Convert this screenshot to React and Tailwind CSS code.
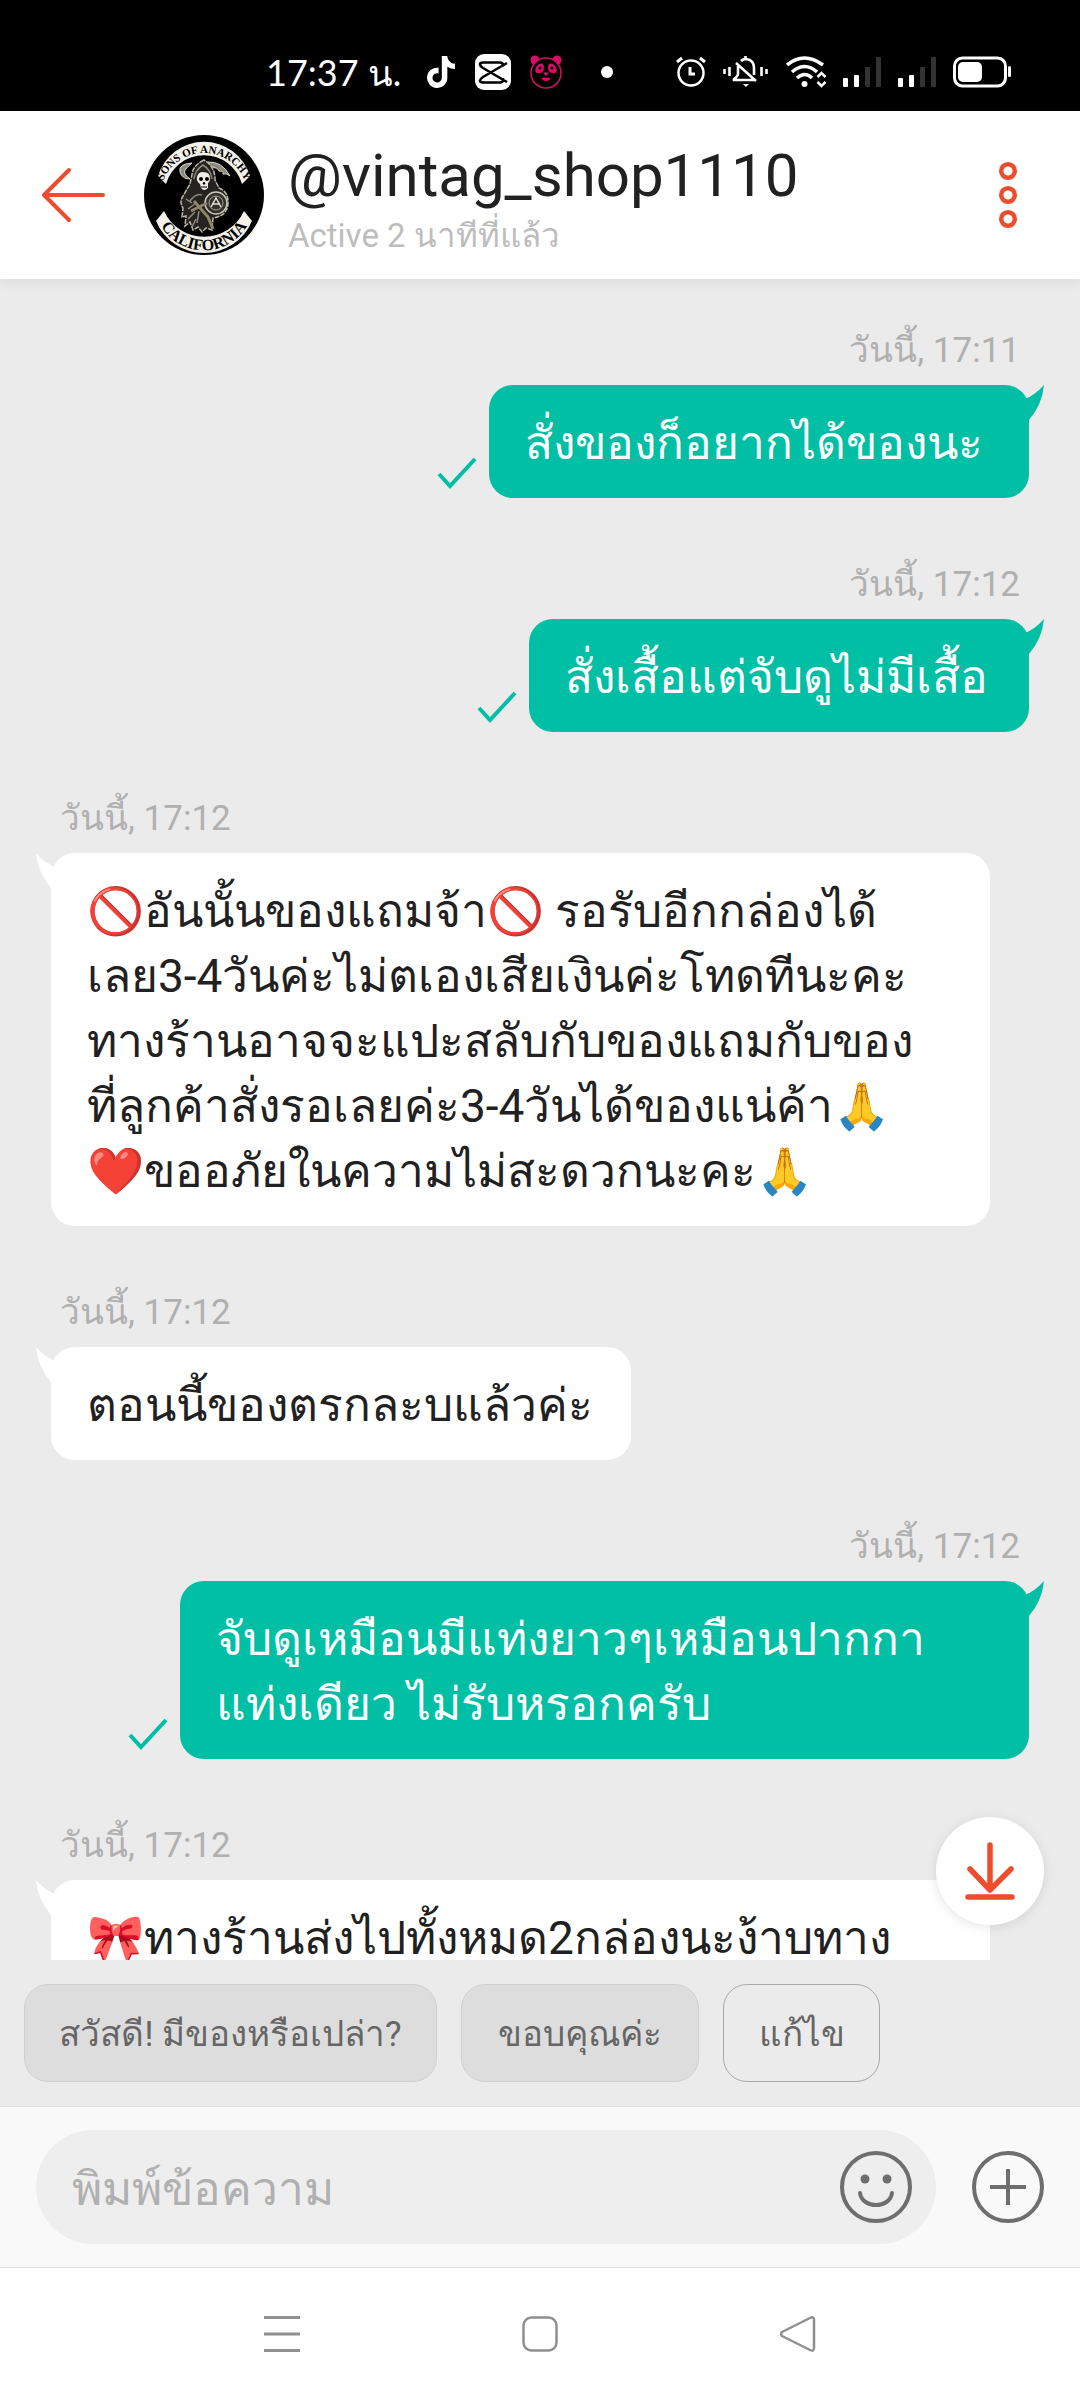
import { FaTiktok } from 'react-icons/fa6'

const messages = [
  { id: 1, mine: true, time: 'วันนี้, 17:11', width: 'w-[540px]', lines: ['สั่งของก็อยากได้ของนะ'] },
  { id: 2, mine: true, time: 'วันนี้, 17:12', width: 'w-[500px]', lines: ['สั่งเสื้อแต่จับดูไม่มีเสื้อ'] },
  {
    id: 3,
    mine: false,
    time: 'วันนี้, 17:12',
    width: 'w-[939px]',
    lines: [
      '🚫อันนั้นของแถมจ้า🚫 รอรับอีกกล่องได้',
      'เลย3-4วันค่ะไม่ตเองเสียเงินค่ะโทดทีนะคะ',
      'ทางร้านอาจจะแปะสลับกับของแถมกับของ',
      'ที่ลูกค้าสั่งรอเลยค่ะ3-4วันได้ของแน่ค้า🙏',
      '❤️ขออภัยในความไม่สะดวกนะคะ🙏'
    ]
  },
  { id: 4, mine: false, time: 'วันนี้, 17:12', width: 'w-[580px]', lines: ['ตอนนี้ของตรกละบแล้วค่ะ'] },
  {
    id: 5,
    mine: true,
    time: 'วันนี้, 17:12',
    width: 'w-[849px]',
    lines: ['จับดูเหมือนมีแท่งยาวๆเหมือนปากกา', 'แท่งเดียว ไม่รับหรอกครับ']
  },
  {
    id: 6,
    mine: false,
    time: 'วันนี้, 17:12',
    width: 'w-[939px]',
    lines: ['🎀ทางร้านส่งไปทั้งหมด2กล่องนะง้าบทาง']
  }
]

const CapCutIcon = () => (
  <svg viewBox="0 0 36 36" className="size-9">
    <rect width="36" height="36" rx="9" fill="#fff" />
    <path
      d="M32 9 8 23q-3 2-3 3.500q0 2 3 2h17q3 0 3-3v-1.500M32 28 8 14q-3-2-3-3.500q0-2 3-2h17q3 0 3 3v1"
      fill="none"
      stroke="#000"
      strokeWidth="2.600"
    />
  </svg>
)

const PandaIcon = () => (
  <svg viewBox="0 0 34 34" className="size-[34px]" fill="#d70f64">
    <circle cx="6" cy="5" r="4.500" />
    <circle cx="28" cy="5" r="4.500" />
    <circle cx="17" cy="18" r="15" fill="#000" stroke="#d70f64" strokeWidth="1.500" />
    <path d="M14 9c2 4 1 9-4 9-4 1-5-4-2-7 1-2 4-3 6-2zM20 9c-2 4-1 9 4 9 4 1 5-4 2-7-1-2-4-3-6-2z" />
    <circle cx="11" cy="13" r="1.500" fill="#000" />
    <circle cx="23" cy="13" r="1.500" fill="#000" />
    <path d="M14 18q3-1.500 6 0l-3 3zM12.500 23q4.500-1 9 0-1 3-4.500 3t-4.500-3z" />
  </svg>
)

const AlarmIcon = () => (
  <svg viewBox="0 0 30 32" className="h-8 w-[30px]" fill="none" stroke="#fff" strokeWidth="2.500">
    <circle cx="15" cy="17" r="12.500" />
    <path d="M14 11v7h5" strokeWidth="3" />
    <path d="M1 6l5-4M29 6l-5-4" strokeWidth="3" />
  </svg>
)

const MutedBellIcon = () => (
  <svg viewBox="0 0 46 32" className="h-8 w-[46px]" fill="none" stroke="#fff" strokeWidth="2.600">
    <path d="M1.500 13v5M6.500 11v9M38.500 11v9M43.500 13v5" />
    <path d="M18 5q2-2 5-2 8 1 8 9v7M15 10v8q0 2-4 5v1h20M13 7l20 18" />
    <path d="M20 28h6l-3 3z" fill="#fff" stroke="none" />
    <path d="M22.500 0v4" />
  </svg>
)

const WifiIcon = () => (
  <svg viewBox="0 0 40 32" className="h-8 w-10" fill="none" stroke="#fff" strokeWidth="3.500">
    <path d="M1 9q17-14 36 0M6 16q13-11 25 0M11 22q8-7 15 0" />
    <circle cx="18.500" cy="28" r="3" fill="#fff" stroke="none" />
    <path d="M31.500 21l4-4 4 4M31.500 26l4 4 4-4" strokeWidth="2.500" />
  </svg>
)

const SignalIcon = () => (
  <svg viewBox="0 0 38 32" className="h-8 w-[38px]" fill="#fff">
    <rect x="0" y="22" width="5" height="9" rx="1" />
    <rect x="11" y="19" width="5" height="12" rx="1" />
    <rect x="22" y="11" width="5" height="20" rx="1" fill="#333" />
    <rect x="33" y="1" width="5" height="30" rx="1" fill="#333" />
  </svg>
)

const BatteryIcon = () => (
  <svg viewBox="0 0 58 32" className="h-8 w-[58px]" fill="#fff">
    <rect x="1.500" y="2" width="51" height="28" rx="8" fill="none" stroke="#fff" strokeWidth="3" />
    <rect x="5" y="6" width="24" height="20" rx="5" />
    <rect x="55" y="10" width="3" height="11" rx="1.500" />
  </svg>
)

const Avatar = () => (
  <svg viewBox="0 0 120 120" className="size-[120px] shrink-0" role="img" aria-label="Shop logo">
    <defs>
      <path id="topArc" d="M19 46A44 44 0 0 1 101 46" />
      <path id="bottomArc" d="M14 85A50 50 0 0 0 106 85" />
    </defs>
    <circle cx="60" cy="60" r="60" />
    {/* scythe */}
    <path d="M64 27q14-1 22 14-3-3-7-2 1-3-4-3 0-3-11-5zM48 28q-14 1-12 9 2 7 10 7-7-5-5-9 2-3 7-7z" fill="#8d8a80" stroke="#d9d6cb" strokeWidth="1" />
    {/* hood and robe */}
    <path
      d="M60 25q-8 4-11 10l-3 14-7 12q-4 6 0 12l-1 9 4-1-1 10 5-4 3 8 5-3 4 5 4-4 6 2 1-12q14-2 15-14 1-12-9-16l-4-8q0-14-11-20z"
      fill="#25231f"
      stroke="#b9b6aa"
      strokeWidth="1.500"
      strokeDasharray="5 1"
    />
    <path d="M50 44q1-9 9-14 8 5 9 14M46 66q6-8 12-6M44 74l8-6M44 84l7-7M53 88l2-12M42 64l6 4M48 92l4-8" fill="none" stroke="#8d8a80" strokeWidth="1.500" />
    {/* skull */}
    <path d="M53 42q1-5 6-5 7 0 7 6 0 4-2 5v5q-4 4-7 0l-1-4q-4-3-3-7z" fill="#eeece4" />
    <circle cx="57" cy="44" r="2" />
    <circle cx="63" cy="44" r="2" />
    <path d="M59 49l1-2 1 2zM57 52h6" stroke="#000" strokeWidth="1" />
    {/* crystal ball */}
    <circle cx="72" cy="68" r="11" fill="#33312c" stroke="#c9c6ba" strokeWidth="1.500" />
    <circle cx="72" cy="68" r="7" fill="none" stroke="#a5a297" />
    <path d="M67 72l5-9 5 9M68 69h8" fill="none" stroke="#e4e1d6" strokeWidth="1.500" />
    {/* rifle */}
    <path d="M50 66l14 16 5 12M47 76l16-8" fill="none" stroke="#8f8568" strokeWidth="3" />
    {/* banners */}
    <path d="M14 41A48 48 0 0 1 106 41L98 49A39.500 39.500 0 0 0 22 49z" fill="#f3f1ea" />
    <path d="M20 76A44 44 0 0 0 100 76L108 86A52 52 0 0 1 12 86z" fill="#f3f1ea" />
    <text className="font-['Liberation_Serif',serif] text-[11px] font-bold">
      <textPath href="#topArc" startOffset="50%" textAnchor="middle">SONS OF ANARCHY</textPath>
    </text>
    <text className="font-['Liberation_Serif',serif] text-[16px] font-bold">
      <textPath href="#bottomArc" startOffset="50%" textAnchor="middle">CALIFORNIA</textPath>
    </text>
  </svg>
)

function StatusBar() {
  return (
    <div className="flex h-[111px] shrink-0 items-center bg-black pt-8 pr-[69px] pl-[266px] text-white">
      <span className="text-[36px] leading-10 whitespace-nowrap font-['Lato',sans-serif]">17:37 น.</span>
      <div className="ml-6 flex items-center gap-[18px]">
        <FaTiktok className="size-8" />
        <CapCutIcon />
        <PandaIcon />
        <span className="ml-5 size-3 rounded-full bg-white" />
      </div>
      <div className="ml-auto flex items-center gap-[17px]">
        <AlarmIcon />
        <MutedBellIcon />
        <WifiIcon />
        <SignalIcon />
        <SignalIcon />
        <BatteryIcon />
      </div>
    </div>
  )
}

function Header() {
  return (
    <header className="z-10 flex h-[168px] shrink-0 items-center bg-white pr-[60px] pl-10 shadow-[0_2px_14px_rgba(0,0,0,0.08)]">
      <button aria-label="Back">
        <svg viewBox="0 0 66 60" className="h-[60px] w-[66px]" fill="none" stroke="#ee4d2d" strokeWidth="4" strokeLinecap="round" strokeLinejoin="round">
          <path d="M63 30H4M29 5L4 30l25 25" />
        </svg>
      </button>
      <div className="ml-[38px]">
        <Avatar />
      </div>
      <div className="ml-6 min-w-0 flex-1 pt-3">
        <h1 className="text-[60px] leading-[68px] text-[#212121]">@vintag_shop1110</h1>
        <p className="mt-[2px] text-[33px] leading-[48px] text-[#bdbdbd]">Active 2 นาทีที่แล้ว</p>
      </div>
      <button aria-label="More options">
        <svg viewBox="0 0 24 68" className="h-[68px] w-6" fill="none" stroke="#ee4d2d" strokeWidth="4.500">
          <circle cx="12" cy="10" r="6.800" />
          <circle cx="12" cy="34" r="6.800" />
          <circle cx="12" cy="58" r="6.800" />
        </svg>
      </button>
    </header>
  )
}

function Message({ message }) {
  const { mine, time, lines, width } = message
  return (
    <li className={mine ? 'flex flex-col items-end pr-[51px]' : 'flex flex-col items-start pl-[51px]'}>
      <time className="mx-[9px] mb-[10px] text-[35px] leading-[48px] text-[#b0b0b0]">{time}</time>
      <div className="flex items-end gap-3">
        {mine && (
          <svg viewBox="0 0 40 34" className="mb-[8px] h-[34px] w-10" fill="none" stroke="#00bfa5" strokeWidth="4">
            <path d="M2 18l11 12L38 3" />
          </svg>
        )}
        <div
          className={`relative rounded-3xl px-9 pt-[26px] pb-[22px] text-[46px] leading-[65px] whitespace-nowrap ${width} ${
            mine ? 'bg-[#00bfa5] text-white' : 'bg-white text-[#212121]'
          }`}
        >
          {mine ? (
            <svg viewBox="0 0 30 40" className="absolute top-0 -right-[15px] h-10 w-[30px]" fill="#00bfa5">
              <path d="M30 0Q21 10 11 14L8 30 15 35Q28 20 30 0z" />
            </svg>
          ) : (
            <svg viewBox="0 0 30 40" className="absolute top-0 -left-[15px] h-10 w-[30px]" fill="#fff">
              <path d="M0 0Q9 10 19 14L22 30 15 35Q2 20 0 0z" />
            </svg>
          )}
          {lines.map((line) => (
            <p key={line}>{line}</p>
          ))}
        </div>
      </div>
    </li>
  )
}

function QuickReplies() {
  const base = 'h-[98px] rounded-3xl border pt-1 text-[35px] text-[#666]'
  return (
    <div className="flex shrink-0 gap-6 px-6 pt-6 pb-6">
      <button className={`${base} w-[413px] border-[#d0d0d0] bg-[#ddd]`}>สวัสดี! มีของหรือเปล่า?</button>
      <button className={`${base} w-[238px] border-[#d0d0d0] bg-[#ddd]`}>ขอบคุณค่ะ</button>
      <button className={`${base} w-[157px] border-[#a8a8a8]`}>แก้ไข</button>
    </div>
  )
}

function Composer() {
  return (
    <form className="flex h-[162px] shrink-0 items-center gap-9 border-y border-[#e0e0e0] bg-[#f9f9f9] px-9">
      <div className="flex h-[114px] flex-1 items-center rounded-full bg-[#eee] pr-6 pl-9">
        <input
          aria-label="พิมพ์ข้อความ"
          placeholder="พิมพ์ข้อความ"
          className="h-full min-w-0 flex-1 bg-transparent pt-1 text-[46px] outline-none placeholder:text-[#b0b0b0]"
        />
        <button type="button" aria-label="Emoji">
          <svg viewBox="0 0 72 72" className="size-[72px]" fill="none" stroke="#6e6e6e" strokeWidth="4">
            <circle cx="36" cy="36" r="34" />
            <path d="M20 42c2 16 30 16 32 0" strokeLinecap="round" />
            <circle cx="25" cy="28" r="4.500" fill="#6e6e6e" stroke="none" />
            <circle cx="47" cy="28" r="4.500" fill="#6e6e6e" stroke="none" />
          </svg>
        </button>
      </div>
      <button type="button" aria-label="Attach">
        <svg viewBox="0 0 72 72" className="size-[72px]" fill="none" stroke="#6e6e6e" strokeWidth="4">
          <circle cx="36" cy="36" r="34" />
          <path d="M36 18v36M18 36h36" />
        </svg>
      </button>
    </form>
  )
}

function SystemNav() {
  return (
    <nav className="flex h-[132px] shrink-0 items-center justify-center gap-[222px] bg-white">
      <button aria-label="Recent apps">
        <svg viewBox="0 0 36 36" className="size-9" stroke="#909090" strokeWidth="3">
          <path d="M0 1.500h36M0 18h36M0 34.500h36" />
        </svg>
      </button>
      <button aria-label="Home">
        <svg viewBox="0 0 36 36" className="size-9" fill="none" stroke="#909090" strokeWidth="2.500">
          <rect x="1.500" y="1.500" width="33" height="33" rx="8" />
        </svg>
      </button>
      <button aria-label="Back">
        <svg viewBox="0 0 36 36" className="size-9" fill="none" stroke="#909090" strokeWidth="2.500" strokeLinejoin="round">
          <path d="M30 2q4-2 4 2v28q0 4-4 2L2 20q-2-2 0-4z" />
        </svg>
      </button>
    </nav>
  )
}

export default function App() {
  return (
    <div className="flex h-screen flex-col bg-[#ebebeb] font-['Roboto',sans-serif]">
      <StatusBar />
      <Header />
      <main className="relative min-h-0 flex-1">
        <ul className="flex h-full flex-col gap-[63px] overflow-hidden pt-12">
          {messages.map((m) => (
            <Message key={m.id} message={m} />
          ))}
        </ul>
        <button
          aria-label="Scroll to latest"
          className="absolute right-9 bottom-[35px] flex size-[108px] items-center justify-center rounded-full bg-white shadow-[0_2px_12px_rgba(0,0,0,0.1)]"
        >
          <svg viewBox="0 0 50 60" className="h-[60px] w-[50px]" fill="none" stroke="#ee4d2d" strokeWidth="5.500" strokeLinecap="round" strokeLinejoin="round">
            <path d="M25 4v45M5 28l20 21 21-21M3 56h44" />
          </svg>
        </button>
      </main>
      <QuickReplies />
      <Composer />
      <SystemNav />
    </div>
  )
}
